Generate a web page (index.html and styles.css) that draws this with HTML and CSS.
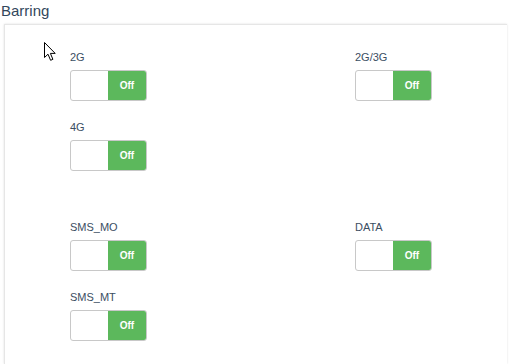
FILE: index.html
```html
<!DOCTYPE html>
<html lang="en">
<head>
    <meta charset="UTF-8">
    <title>Barring</title>
    <link rel="stylesheet" href="styles.css">
</head>
<body>
    <h2 class="title">Barring</h2>

    <section class="card">
        <!-- network barring -->
        <div class="group">
            <div class="field">
                <label>2G</label>
                <div class="switch"><span class="switch-knob"></span><span class="switch-off">Off</span></div>
            </div>
            <div class="field">
                <label>2G/3G</label>
                <div class="switch"><span class="switch-knob"></span><span class="switch-off">Off</span></div>
            </div>
            <div class="field">
                <label>4G</label>
                <div class="switch"><span class="switch-knob"></span><span class="switch-off">Off</span></div>
            </div>
        </div>

        <!-- service barring -->
        <div class="group">
            <div class="field">
                <label>SMS_MO</label>
                <div class="switch"><span class="switch-knob"></span><span class="switch-off">Off</span></div>
            </div>
            <div class="field">
                <label>DATA</label>
                <div class="switch"><span class="switch-knob"></span><span class="switch-off">Off</span></div>
            </div>
            <div class="field">
                <label>SMS_MT</label>
                <div class="switch"><span class="switch-knob"></span><span class="switch-off">Off</span></div>
            </div>
        </div>

        <svg class="cursor" width="13" height="20" viewBox="0 0 13 20">
            <path d="M0.5 0.5 L0.5 15.5 L4 12.2 L6.6 18.3 L8.9 17.3 L6.4 11.4 L11.2 11.4 Z" fill="#fff" stroke="#000" stroke-width="1" stroke-linejoin="miter"/>
        </svg>
    </section>
</body>
</html>
```

FILE: styles.css
```css
body {
    margin: 0;
    background: #fff;
    font-family: "Liberation Sans", Arial, sans-serif;
    color: #32475c;
    overflow: hidden;
}

.title {
    margin: 0 0 2px 1px;
    font-size: 15px;
    line-height: 22px;
    font-weight: normal;
    color: #32475c;
}

.card {
    position: relative;
    margin-left: 4px;
    width: 503px;
    height: 340px;
    box-sizing: border-box;
    padding: 24px 0 0 65px;
    border: 1px solid #e6e6e6;
    border-right: none;
    border-bottom: none;
    box-shadow: 0 0 2px rgba(0, 0, 0, 0.12);
    display: flex;
    flex-direction: column;
    gap: 48px;
}

.group {
    display: grid;
    grid-template-columns: 285px 1fr;
    row-gap: 18px;
}

.field label {
    display: block;
    font-size: 11px;
    line-height: 16px;
    margin-bottom: 5px;
    color: #3b4e62;
}

.switch {
    display: flex;
    width: 77px;
    height: 31px;
    box-sizing: border-box;
    border: 1px solid #c8c8c8;
    border-radius: 3px;
    overflow: hidden;
    background: #fff;
}

.switch-knob {
    flex: 1;
}

.switch-off {
    width: 38px;
    background: #5cb85c;
    color: #fff;
    font-size: 10px;
    font-weight: bold;
    line-height: 29px;
    text-align: center;
}

/* mouse pointer in the screenshot */
.cursor {
    position: absolute;
    left: 39px;
    top: 17px;
}
```
